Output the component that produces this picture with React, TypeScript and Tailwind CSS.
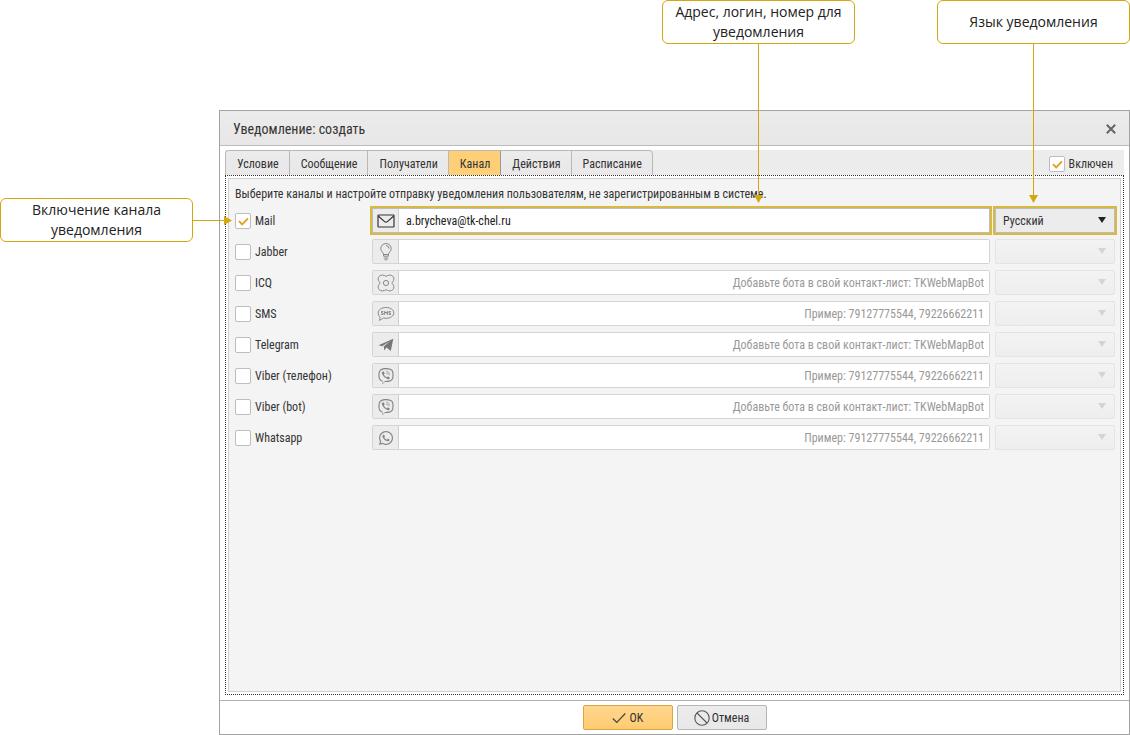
import { useState } from 'react'
import type { ReactNode } from 'react'
import { FaViber, FaWhatsapp } from 'react-icons/fa'

interface Channel {
  id: string
  label: string
  icon: ReactNode
  placeholder?: string
}

const BOT_HINT = 'Добавьте бота в свой контакт-лист: TKWebMapBot'
const PHONE_HINT = 'Пример: 79127775544, 79226662211'

const TABS = ['Условие', 'Сообщение', 'Получатели', 'Канал', 'Действия', 'Расписание']

function MailIcon() {
  return (
    <svg width="18" height="14" viewBox="0 0 18 14" fill="none" stroke="#333" strokeWidth="1.2">
      <rect x="1" y="1" width="16" height="12" rx="0.5" />
      <path d="M1.3 2 7.6 7.6q1.4 1.2 2.8 0L16.7 2" />
    </svg>
  )
}

function BulbIcon() {
  return (
    <svg width="14" height="18" viewBox="0 0 14 18" fill="none" stroke="#888" strokeWidth="1">
      <path d="M4.6 13.2v-2C4.6 9.6 1.8 8.6 1.8 5.7a5.2 5.2 0 0 1 10.4 0c0 2.9-2.8 3.9-2.8 5.5v2z" />
      <path d="M4.6 11.5h4.8M4.8 15h4.4M5.6 16.7h2.8M7 2.6a3 3 0 0 1 3 3" />
    </svg>
  )
}

function FlowerIcon() {
  return (
    <svg width="18" height="18" viewBox="0 0 18 18" fill="none" stroke="#888" strokeWidth="1">
      <path d="M9 2.4C7.2.8 3.8.6 2.2 2.3.6 4 .9 6.6 2.4 7.8c.6.7.6 1.7 0 2.4-1.5 1.2-1.8 3.8-.2 5.5 1.6 1.7 5 1.5 6.8-.1 1.8 1.6 5.2 1.8 6.8.1 1.6-1.7 1.3-4.3-.2-5.5-.6-.7-.6-1.7 0-2.4 1.5-1.2 1.8-3.8.2-5.5C14.2.6 10.8.8 9 2.4z" />
      <circle cx="9" cy="9" r="2.6" />
    </svg>
  )
}

function SmsIcon() {
  return (
    <svg width="18" height="16" viewBox="0 0 18 16" fill="none" stroke="#888" strokeWidth="1">
      <path d="M9 1.5c4.4 0 7.8 2.3 7.8 5.4S13.4 12.3 9 12.3c-1 0-1.9-.1-2.8-.3-1.2 1.3-2.7 1.9-4.2 2.2.9-.9 1.2-2 1-3.3C1.8 9.9 1.2 8.5 1.2 6.9 1.2 3.8 4.6 1.5 9 1.5z" />
      <path d="M6.3 5.5H4.5V7h1.6v1.5H4.2M7.6 8.8V5.4L9 7.3l1.4-1.9v3.4M13.7 5.5h-1.8V7h1.6v1.5h-1.9" />
    </svg>
  )
}

function PlaneIcon() {
  return (
    <svg width="16" height="14" viewBox="0 0 16 14" fill="#777">
      <path d="M.5 7.2 15.3.8l-2.5 12.1-4.3-3.3-2.2 2.8-.5-4 6.2-5.3L4.2 8.2z" />
    </svg>
  )
}

function CheckMark({ className }: { className: string }) {
  return (
    <svg className={className} viewBox="0 0 12 10" fill="none" stroke="currentColor" strokeWidth="2">
      <path d="M1 4.6 4.5 8.2 11 1.6" />
    </svg>
  )
}

const CHANNELS: Channel[] = [
  { id: 'mail', label: 'Mail', icon: <MailIcon /> },
  { id: 'jabber', label: 'Jabber', icon: <BulbIcon /> },
  { id: 'icq', label: 'ICQ', icon: <FlowerIcon />, placeholder: BOT_HINT },
  { id: 'sms', label: 'SMS', icon: <SmsIcon />, placeholder: PHONE_HINT },
  { id: 'telegram', label: 'Telegram', icon: <PlaneIcon />, placeholder: BOT_HINT },
  { id: 'viber-phone', label: 'Viber (телефон)', icon: <FaViber size={16} />, placeholder: PHONE_HINT },
  { id: 'viber-bot', label: 'Viber (bot)', icon: <FaViber size={16} />, placeholder: BOT_HINT },
  { id: 'whatsapp', label: 'Whatsapp', icon: <FaWhatsapp size={16} />, placeholder: PHONE_HINT },
]

interface CheckboxProps {
  id: string
  label: string
  checked: boolean
  onChange: (checked: boolean) => void
}

function Checkbox({ id, label, checked, onChange }: CheckboxProps) {
  return (
    <label htmlFor={id} className="flex items-center gap-1">
      <span className="relative flex h-4 w-4 shrink-0">
        <input
          id={id}
          type="checkbox"
          checked={checked}
          onChange={e => onChange(e.target.checked)}
          className="h-4 w-4 appearance-none rounded-xs border border-[#bdbdbd] bg-white"
        />
        {checked && (
          <CheckMark className="pointer-events-none absolute top-1 left-[3px] h-[9px] w-[11px] text-[#e0a021]" />
        )}
      </span>
      {label}
    </label>
  )
}

function ChannelRow({ channel }: { channel: Channel }) {
  const [enabled, setEnabled] = useState(channel.id === 'mail')
  const [address, setAddress] = useState(channel.id === 'mail' ? 'a.brycheva@tk-chel.ru' : '')

  return (
    <div className="flex h-[31px] items-center">
      <div className="w-[137px] shrink-0">
        <Checkbox id={channel.id} label={channel.label} checked={enabled} onChange={setEnabled} />
      </div>
      <div
        className={
          enabled
            ? 'flex h-[25px] min-w-0 flex-1 border border-[#bdbdbd] outline-2 outline-[#d9b93f]'
            : 'flex h-[25px] min-w-0 flex-1 rounded-xs border border-[#d4d4d4]'
        }
      >
        <span className="flex w-[26px] shrink-0 items-center justify-center border-r border-[#cfcfcf] bg-[#ececec] text-[#858585]">
          {channel.icon}
        </span>
        <input
          type="text"
          aria-label={channel.label}
          value={address}
          placeholder={channel.placeholder}
          disabled={!enabled}
          onChange={e => setAddress(e.target.value)}
          className="min-w-0 flex-1 bg-white pr-[5px] pl-[7px] text-[#222] placeholder:text-right placeholder:text-[#999]"
        />
      </div>
      <div className="relative ml-[5px] w-[120px] shrink-0">
        <select
          aria-label={`Язык: ${channel.label}`}
          disabled={!enabled}
          className={
            enabled
              ? 'block h-[25px] w-full appearance-none border border-[#bdbdbd] bg-[#ececec] px-[7px] outline-2 outline-[#d9b93f]'
              : 'block h-[25px] w-full appearance-none rounded-xs border border-[#e4e4e4] bg-linear-to-b from-[#f3f3f3] to-[#eeeeee] px-[7px]'
          }
        >
          {enabled ? <option>Русский</option> : <option />}
        </select>
        <svg
          className="pointer-events-none absolute top-[9px] right-[9px]"
          width="8"
          height="6"
          viewBox="0 0 8 6"
          fill={enabled ? '#222' : '#d4d4d4'}
        >
          <path d="M0 0h8L4 6z" />
        </svg>
      </div>
    </div>
  )
}

function Callout({ children, direction }: { children: ReactNode; direction: 'down' | 'right' }) {
  return (
    <div className="relative z-10 flex h-11 w-[193px] shrink-0 items-center justify-center rounded-md border border-[#d2a70f] bg-white text-center font-['Open_Sans','Noto_Sans',sans-serif] text-sm leading-5 text-[#222]">
      {children}
      {direction === 'down' ? (
        <span className="absolute top-full left-[91px] flex w-[9px] flex-col items-center">
          <span className="h-[152px] w-px bg-[#d2a70f]" />
          <svg width="9" height="8" viewBox="0 0 9 8" fill="#d2a70f">
            <path d="M0 0h9L4.5 8z" />
          </svg>
        </span>
      ) : (
        <span className="absolute top-[17px] left-full flex h-[9px] items-center">
          <span className="h-px w-8 bg-[#d2a70f]" />
          <svg width="8" height="9" viewBox="0 0 8 9" fill="#d2a70f">
            <path d="M0 0v9L8 4.5z" />
          </svg>
        </span>
      )}
    </div>
  )
}

export default function App() {
  const [activeTab, setActiveTab] = useState('Канал')
  const [included, setIncluded] = useState(true)

  return (
    <div className="flex min-h-screen flex-col bg-white font-['Roboto_Condensed','Liberation_Sans_Narrow',Roboto,sans-serif] text-xs text-[#333]">
      {/* Callouts over the dialog */}
      <div className="flex h-[110px] items-start justify-end gap-[82px]">
        <Callout direction="down">
          Адрес, логин, номер для
          <br />
          уведомления
        </Callout>
        <Callout direction="down">Язык уведомления</Callout>
      </div>

      <div className="flex flex-1">
        <aside className="w-[219px] shrink-0 pt-[88px]">
          <Callout direction="right">
            Включение канала
            <br />
            уведомления
          </Callout>
        </aside>

        {/* Dialog */}
        <div role="dialog" aria-label="Уведомление: создать" className="flex min-w-0 flex-1 flex-col border border-[#a3a3a3] bg-white">
          <header className="flex h-[35px] items-center justify-between border-b border-[#bcbcbc] bg-linear-to-b from-[#ececec] to-[#e8e6e6] px-[13px] pt-px">
            <h1 className="text-sm">Уведомление: создать</h1>
            <button type="button" aria-label="Закрыть">
              <svg width="10" height="10" viewBox="0 0 10 10" stroke="#666" strokeWidth="2">
                <path d="M.8.8 9.2 9.2M9.2.8.8 9.2" />
              </svg>
            </button>
          </header>

          <div className="flex flex-1 flex-col px-[5px] pt-1 pb-[5px]">
            <div className="flex h-[25px] items-stretch justify-between bg-[#ececec] pr-[11px]">
              <div role="tablist" className="flex rounded-t-sm border-t border-l border-[#b8b8b8]">
                {TABS.map(tab => (
                  <button
                    key={tab}
                    type="button"
                    role="tab"
                    aria-selected={tab === activeTab}
                    onClick={() => setActiveTab(tab)}
                    className={
                      tab === activeTab
                        ? 'border-r border-[#999] bg-[#ffcf78] pt-px pr-2.5 pl-[11px]'
                        : 'border-r border-[#b8b8b8] bg-linear-to-b from-[#ececec] to-[#e9e7e7] pt-px pr-2.5 pl-[11px] first:rounded-tl-sm last:rounded-tr-sm'
                    }
                  >
                    {tab}
                  </button>
                ))}
              </div>
              <div className="flex pt-0.5">
                <Checkbox id="included" label="Включен" checked={included} onChange={setIncluded} />
              </div>
            </div>

            <div className="flex flex-1 flex-col border border-dotted border-[#333] p-0.5">
              <div className="flex-1 border border-[#d0d0d0] bg-[#f4f4f4] pt-[7px] pr-[5px] pl-[6px]">
                <p className="h-[19px] leading-4">
                  Выберите каналы и настройте отправку уведомления пользователям, не зарегистрированным в системе.
                </p>
                {CHANNELS.map(channel => (
                  <ChannelRow key={channel.id} channel={channel} />
                ))}
              </div>
            </div>
          </div>

          <footer className="flex justify-center gap-1 border-t border-[#b0b0b0] py-1">
            <button
              type="button"
              className="flex h-[25px] w-[90px] items-center justify-center gap-1 rounded-xs border border-[#d9a441] bg-linear-to-b from-[#ffd78f] to-[#ffcb70]"
            >
              <svg width="14" height="12" viewBox="0 0 14 12" fill="none" stroke="#444" strokeWidth="1.2">
                <path d="M.8 6.5 4.8 10.5 13.3 1.5" />
              </svg>
              OK
            </button>
            <button
              type="button"
              className="flex h-[25px] w-[90px] items-center justify-center gap-0.5 rounded-xs border border-[#b5b5b5] bg-linear-to-b from-[#ececec] to-[#e8e8e8]"
            >
              <svg width="16" height="16" viewBox="0 0 16 16" fill="none" stroke="#555" strokeWidth="1.1">
                <circle cx="8" cy="8" r="7.2" />
                <path d="M3 3l10 10" />
              </svg>
              Отмена
            </button>
          </footer>
        </div>
      </div>
    </div>
  )
}
